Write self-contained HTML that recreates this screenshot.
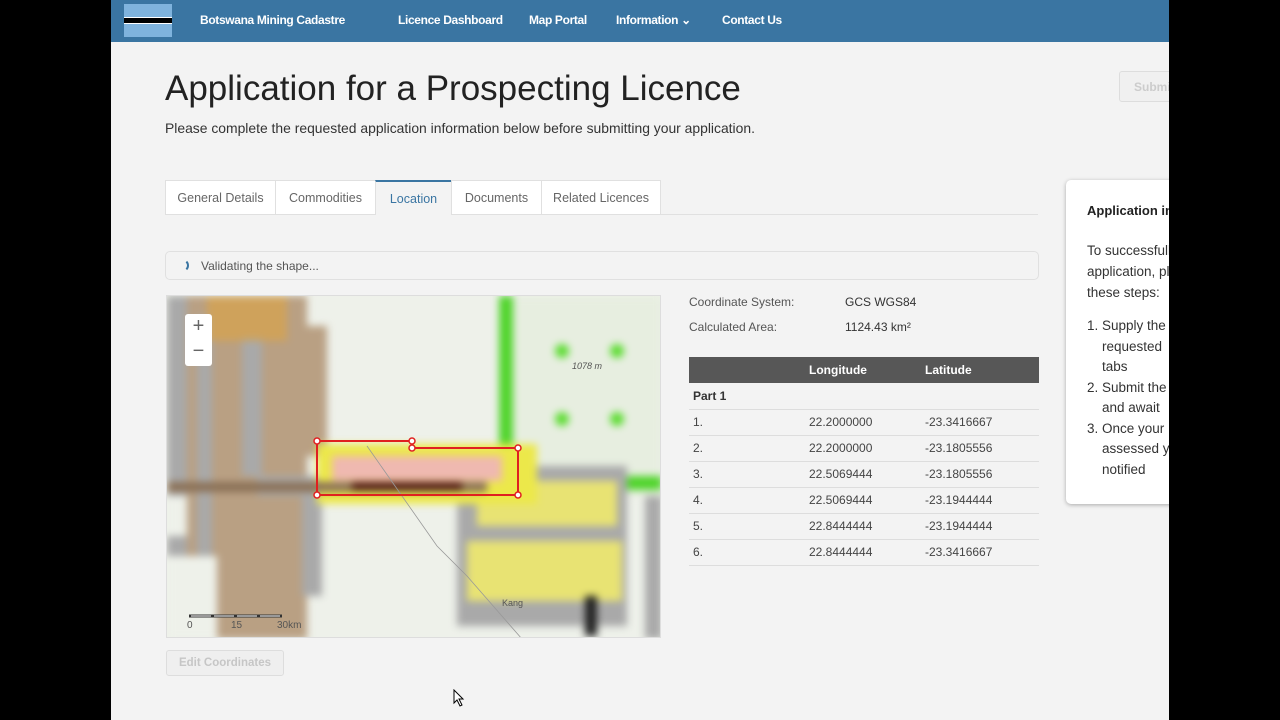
<!DOCTYPE html>
<html><head><meta charset="utf-8">
<style>
*{box-sizing:border-box;margin:0;padding:0}
body{width:1280px;height:720px;background:#000;font-family:"Liberation Sans",sans-serif;position:relative;overflow:hidden}
#pg{position:absolute;left:111px;top:0;width:1058px;height:720px;background:#f3f3f3;overflow:hidden}
.a{position:absolute}
#hd{left:0;top:0;width:1058px;height:42px;background:#3a75a2}
#hd span{position:absolute;top:13px;color:#fff;font-size:12px;font-weight:bold;letter-spacing:-0.35px}
.tab{position:absolute;top:180px;height:35px;border:1px solid #e0e0e0;background:#fff;color:#666;font-size:12.5px;line-height:34px;text-align:center}
.m{position:absolute}
td{font-size:12px;color:#444;height:26px;border-bottom:1px solid #ddd}
</style></head><body>
<div id="pg">
<div id="hd" class="a">
 <div class="a" style="left:13px;top:4px;width:48px;height:33px;background:#7fb3dd"><div class="a" style="left:0;top:13px;width:48px;height:7px;background:#000;border-top:1.5px solid #fff;border-bottom:1.5px solid #fff"></div></div>
 <span style="left:89px">Botswana Mining Cadastre</span>
 <span style="left:287px">Licence Dashboard</span>
 <span style="left:418px">Map Portal</span>
 <span style="left:505px">Information ⌄</span>
 <span style="left:611px">Contact Us</span>
</div>
<div class="a" style="left:54px;top:69px;font-size:35px;color:#222">Application for a Prospecting Licence</div>
<div class="a" style="left:54px;top:120px;font-size:13.9px;color:#333">Please complete the requested application information below before submitting your application.</div>
<div class="a" style="left:1008px;top:71px;width:60px;height:31px;border:1px solid #ddd;border-radius:3px;background:#f0f0f0;color:#ccc;font-size:12px;font-weight:bold;padding:8px 14px">Submit</div>
<div class="a" style="left:54px;top:214px;width:873px;height:1px;background:#e0e0e0"></div>
<div class="tab" style="left:54px;width:111px">General Details</div>
<div class="tab" style="left:164px;width:101px">Commodities</div>
<div class="tab" style="left:264px;width:77px;background:#f3f3f3;border-top:2px solid #3a75a2;border-bottom:none;color:#3a75a2">Location</div>
<div class="tab" style="left:340px;width:91px">Documents</div>
<div class="tab" style="left:430px;width:120px">Related Licences</div>
<div class="a" style="left:54px;top:251px;width:874px;height:29px;border:1px solid #e0e0e0;border-radius:5px;background:#f3f3f3">
 <div class="a" style="left:10px;top:7px;width:13px;height:13px;border-radius:50%;border:2px solid transparent;border-right-color:#3a75a2"></div>
 <div class="a" style="left:35px;top:7px;font-size:12px;color:#555">Validating the shape...</div>
</div>
<!-- map -->
<div class="a" style="left:55px;top:295px;width:495px;height:343px;background:#eef1ea;overflow:hidden;border:1px solid #ddd">
 <div style="position:absolute;inset:0;filter:blur(4px)">
  <div class="m" style="left:0;top:0;width:140px;height:343px;background:#b9a083"></div>
  <div class="m" style="left:140px;top:30px;width:20px;height:130px;background:#b9a083"></div>
  <div class="m" style="left:0;top:0;width:20px;height:343px;background:#a9a9a9"></div>
  <div class="m" style="left:30px;top:20px;width:15px;height:250px;background:#a9a9a9"></div>
  <div class="m" style="left:75px;top:40px;width:20px;height:140px;background:#a9a9a9"></div>
  <div class="m" style="left:90px;top:180px;width:60px;height:20px;background:#a9a9a9"></div>
  <div class="m" style="left:135px;top:200px;width:20px;height:100px;background:#a9a9a9"></div>
  <div class="m" style="left:0;top:200px;width:20px;height:40px;background:#eef1ea"></div>
  <div class="m" style="left:0;top:260px;width:50px;height:83px;background:#eef1ea"></div>
  <div class="m" style="left:40px;top:0;width:80px;height:45px;background:#d9a24a;opacity:.7"></div>
  <div class="m" style="left:332px;top:0;width:163px;height:200px;background:#e7eee0"></div>
  <div class="m" style="left:332px;top:0;width:14px;height:180px;background:#4fd42a"></div>
  <div class="m" style="left:346px;top:180px;width:149px;height:14px;background:#4fd42a"></div>
  <div class="m" style="left:388px;top:48px;width:14px;height:14px;border-radius:50%;background:#5bdc30"></div>
  <div class="m" style="left:443px;top:48px;width:14px;height:14px;border-radius:50%;background:#5bdc30"></div>
  <div class="m" style="left:388px;top:116px;width:14px;height:14px;border-radius:50%;background:#5bdc30"></div>
  <div class="m" style="left:443px;top:116px;width:14px;height:14px;border-radius:50%;background:#5bdc30"></div>
  <div class="m" style="left:290px;top:170px;width:170px;height:160px;background:#a9a9a9"></div>
  <div class="m" style="left:310px;top:185px;width:140px;height:45px;background:#e8e373"></div>
  <div class="m" style="left:300px;top:245px;width:155px;height:60px;background:#e8e373"></div>
  <div class="m" style="left:478px;top:200px;width:17px;height:143px;background:#a9a9a9"></div>
  <div class="m" style="left:150px;top:148px;width:220px;height:60px;background:#ece84a"></div>
  <div class="m" style="left:165px;top:160px;width:170px;height:25px;background:#efb9b0"></div>
  <div class="m" style="left:0;top:186px;width:320px;height:10px;background:#8a7056"></div>
  <div class="m" style="left:185px;top:186px;width:110px;height:8px;background:#4a1010"></div>
  <div class="m" style="left:418px;top:300px;width:12px;height:40px;background:#222"></div>
 </div>
 <svg class="m" style="left:0;top:0" width="495" height="343">
  <path d="M200 150 L270 250 L300 280 L355 343" stroke="#999" fill="none" stroke-width="0.8"/>
  <path d="M150 145 L245 145 L245 152 L351 152 L351 199 L150 199 Z" fill="none" stroke="#e02020" stroke-width="2"/>
  <g fill="#fff" stroke="#e02020" stroke-width="1.5">
   <circle cx="150" cy="145" r="3"/><circle cx="245" cy="145" r="3"/><circle cx="245" cy="152" r="3"/><circle cx="351" cy="152" r="3"/><circle cx="351" cy="199" r="3"/><circle cx="150" cy="199" r="3"/></g>
  <text x="405" y="73" font-size="9" font-style="italic" fill="#555">1078 m</text>
  <text x="335" y="310" font-size="9" fill="#555">Kang</text>
  <path d="M22 320 H115" stroke="#333" stroke-width="3"/><path d="M24 320 H113" stroke="#fff" stroke-width="1" stroke-dasharray="20 3"/>
  <text x="20" y="332" font-size="10" fill="#555">0</text><text x="64" y="332" font-size="10" fill="#555">15</text><text x="110" y="332" font-size="10" fill="#555">30km</text>
 </svg>
 <div class="m" style="left:18px;top:18px;width:27px;height:52px;background:#fff;border-radius:3px;text-align:center;color:#666;font-size:20px;line-height:25px">+<br>−</div>
</div>
<div class="a" style="left:55px;top:650px;width:118px;height:26px;border:1px solid #ddd;border-radius:3px;background:#efefef;color:#c6c6c6;font-size:11.5px;font-weight:bold;text-align:center;line-height:24px">Edit Coordinates</div>
<div class="a" style="left:578px;top:290px;font-size:12px;color:#555;line-height:25px">Coordinate System:<br>Calculated Area:</div>
<div class="a" style="left:734px;top:290px;font-size:12px;color:#333;line-height:25px">GCS WGS84<br>1124.43 km²</div>
<table class="a" style="left:578px;top:357px;width:350px;border-collapse:collapse">
<tr style="background:#575757"><td style="height:24px;color:#fff;border:none"></td><td style="color:#fff;font-weight:bold;border:none">Longitude</td><td style="color:#fff;font-weight:bold;border:none">Latitude</td></tr>
<tr><td colspan="3" style="font-weight:bold;padding-left:4px;color:#333">Part 1</td></tr>
<tr><td style="padding-left:4px;width:120px">1.</td><td style="width:116px">22.2000000</td><td>-23.3416667</td></tr>
<tr><td style="padding-left:4px">2.</td><td>22.2000000</td><td>-23.1805556</td></tr>
<tr><td style="padding-left:4px">3.</td><td>22.5069444</td><td>-23.1805556</td></tr>
<tr><td style="padding-left:4px">4.</td><td>22.5069444</td><td>-23.1944444</td></tr>
<tr><td style="padding-left:4px">5.</td><td>22.8444444</td><td>-23.1944444</td></tr>
<tr><td style="padding-left:4px">6.</td><td>22.8444444</td><td>-23.3416667</td></tr>
</table>
<div class="a" style="left:955px;top:180px;width:140px;height:324px;background:#fff;border-radius:5px;box-shadow:0 1px 4px rgba(0,0,0,.3);padding:23px 0 0 21px;font-size:13.5px;color:#333;white-space:nowrap">
 <div style="font-weight:bold;color:#222;font-size:13px">Application information</div>
 <div style="margin-top:22px;line-height:21px">To successfully<br>application, please<br>these steps:</div>
 <div style="margin-top:13px;line-height:20.5px">1. Supply the<br>&nbsp;&nbsp;&nbsp;&nbsp;requested<br>&nbsp;&nbsp;&nbsp;&nbsp;tabs<br>2. Submit the<br>&nbsp;&nbsp;&nbsp;&nbsp;and await<br>3. Once your<br>&nbsp;&nbsp;&nbsp;&nbsp;assessed you<br>&nbsp;&nbsp;&nbsp;&nbsp;notified</div>
</div>
<svg class="a" style="left:342px;top:689px" width="12" height="18"><path d="M1 1 L1 14 L4 11 L7 17 L9 16 L6 10 L10 10 Z" fill="#fff" stroke="#000"/></svg>
</div>
</body></html>
